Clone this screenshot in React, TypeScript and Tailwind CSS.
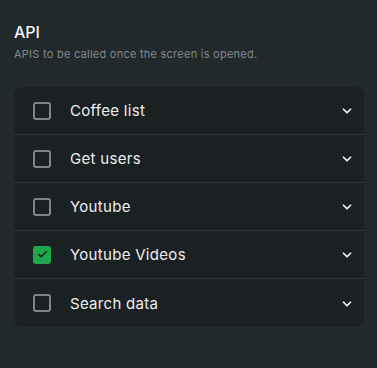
import React from 'react';
import { ChevronDown, Check } from 'lucide-react';

const apis = [
  { name: 'Coffee list', checked: false },
  { name: 'Get users', checked: false },
  { name: 'Youtube', checked: false },
  { name: 'Youtube Videos', checked: true },
  { name: 'Search data', checked: false },
];

export default function App() {
  return (
    <div
      className="w-[377px] h-[368px] bg-[#22292b] px-[14px] pt-[22px] overflow-hidden"
      style={{ fontFamily: 'Inter, "Noto Sans", sans-serif' }}
    >
      <h2 className="text-[16px] leading-[20px] font-medium text-[#f2f4f5]">API</h2>
      <p className="mt-[5px] text-[11px] leading-[14px] tracking-[0.25px] text-[#7f898d]">
        APIS to be called once the screen is opened.
      </p>
      <div className="mt-[26px] w-[350px] rounded-[8px] bg-[#1b2123] divide-y divide-[#30383a]">
        {apis.map(api => (
          <div key={api.name} className="h-[48px] flex items-center pl-[19px] pr-[10px]">
            {api.checked ? (
              <span className="w-[18px] h-[18px] rounded-[3px] bg-[#1fa64b] flex items-center justify-center">
                <Check className="w-[11px] h-[11px] text-[#10241a]" strokeWidth={3.5} />
              </span>
            ) : (
              <span className="w-[18px] h-[18px] rounded-[3px] border-2 border-[#7d868a]" />
            )}
            <span className="ml-[19px] flex-1 pt-[2px] text-[15px] tracking-[0.3px] text-[#eceeef]">{api.name}</span>
            <ChevronDown className="w-[14px] h-[14px] mt-[1px] text-[#f2f4f5]" strokeWidth={3} />
          </div>
        ))}
      </div>
    </div>
  );
}
